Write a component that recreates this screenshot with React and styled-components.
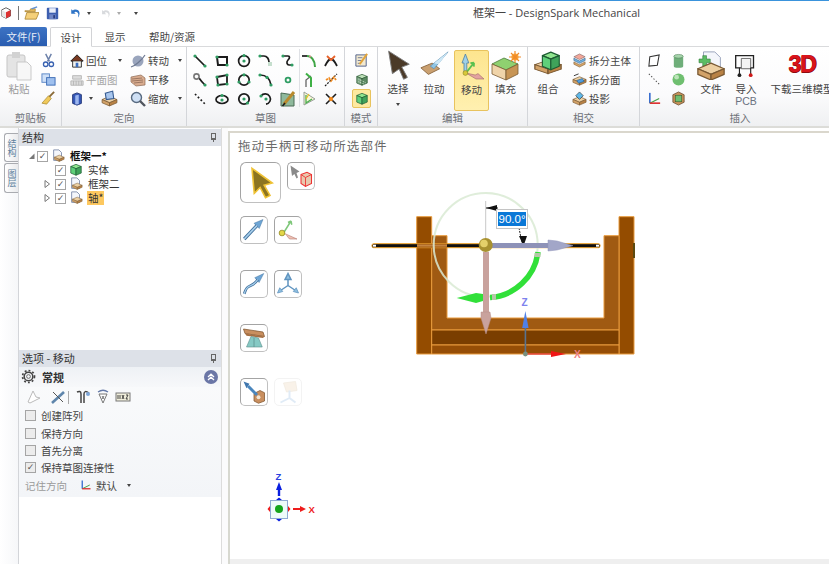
import React from 'react'
import styled, { createGlobalStyle } from 'styled-components'

const CJK = `"Noto Sans CJK SC", "Liberation Sans", sans-serif`

const GlobalStyle = createGlobalStyle`
  html, body { margin: 0; padding: 0; background: #fff; overflow: hidden; }
  body { font-family: ${CJK}; color: #444; }
`

const Window = styled.div`
  width: 829px;
  height: 564px;
  display: flex;
  flex-direction: column;
  overflow: hidden;
  border-top: 1px solid #3a93dc;
  box-sizing: border-box;
`

/* title bar */
const TitleBar = styled.div`
  height: 26px;
  flex: none;
  position: relative;
  display: flex;
  align-items: center;
  background: #fff;
  box-sizing: border-box;
  padding-bottom: 2px;
`
const Quick = styled.div`
  display: flex;
  align-items: center;
`
const QuickItem = styled.span`
  display: block;
  margin-left: ${(p) => p.$ml || 0}px;
`
const QuickSep = styled.span`
  width: 1px;
  height: 14px;
  background: #777;
  margin: 0 5px 0 6px;
`
const Title = styled.div`
  position: absolute;
  left: 473px;
  top: 4px;
  font: 11px/16px "Open Sans", ${CJK};
  color: #444;
  white-space: nowrap;
`
const Caret = styled.i`
  display: inline-block;
  width: 0;
  height: 0;
  border-left: 2.5px solid transparent;
  border-right: 2.5px solid transparent;
  border-top: 3px solid ${(p) => (p.$light ? '#aaa' : '#444')};
  margin: ${(p) => p.$m || '0'};
  flex: none;
`

/* tabs */
const TabBar = styled.div`
  height: 20px;
  flex: none;
  display: flex;
  align-items: flex-end;
  background: #fff;
  border-bottom: 1px solid #d9dadc;
  box-sizing: border-box;
`
const FileTab = styled.div`
  width: 47px;
  height: 19px;
  background: linear-gradient(#3d73c4, #2a5db0);
  border-radius: 2px 2px 0 0;
  color: #e6edf8;
  font-size: 10.5px;
  line-height: 19px;
  text-align: center;
`
const Tab = styled.div`
  font-size: 10.5px;
  line-height: 19px;
  height: 19px;
  color: #444;
  margin-left: ${(p) => p.$ml}px;
  width: ${(p) => p.$w}px;
  text-align: center;
  box-sizing: border-box;
  ${(p) =>
    p.$active &&
    `background:#fff;border:1px solid #d2d3d6;border-bottom:1px solid #fff;height:20px;margin-bottom:-1px;border-radius:2px 2px 0 0;`}
`

/* ribbon */
const Ribbon = styled.div`
  height: 79px;
  flex: none;
  display: flex;
  background: linear-gradient(#fff 0%, #fbfbfc 60%, #eff0f2 100%);
  border-bottom: 2px solid #dcdcd8;
`
const Group = styled.div`
  width: ${(p) => p.$w}px;
  flex: ${(p) => (p.$grow ? '1 1 auto' : 'none')};
  box-sizing: border-box;
  border-right: 1px solid #d4d6da;
  display: flex;
  flex-direction: column;
  overflow: hidden;
  ${(p) => p.$grow && 'border-right:none;'}
`
const GroupBody = styled.div`
  height: 63px;
  flex: none;
  display: flex;
  padding-left: ${(p) => p.$pl || 0}px;
  gap: ${(p) => p.$gap || 0}px;
`
const GroupLabel = styled.div`
  text-align: center;
  font-size: 10.5px;
  line-height: 16px;
  color: #6d7076;
  width: ${(p) => (p.$w ? `${p.$w}px` : 'auto')};
`
const Paste = styled.div`
  width: 38px;
  display: flex;
  flex-direction: column;
  align-items: center;
  font-size: 10.5px;
  color: #9a9a9a;
  line-height: 14px;
  padding-top: 3px;
`
const IconCol = styled.div`
  display: flex;
  flex-direction: column;
  align-items: ${(p) => p.$align || 'center'};
  width: ${(p) => p.$w || 'auto'};
  padding-top: 4px;
`
const SmallRow = styled.div`
  height: 19px;
  display: flex;
  align-items: center;
  font-size: 10.5px;
  color: ${(p) => (p.$off ? '#a6a6a6' : '#444')};
  white-space: nowrap;
  gap: 2px;
`
const SketchGrid = styled.div`
  display: grid;
  grid-template-columns: repeat(7, 21.9px);
  grid-auto-rows: 19px;
  justify-items: center;
  align-items: center;
  padding: 4px 0 0 2px;
  background: linear-gradient(#dfe1e5, #dfe1e5) 112px 2px / 1px 58px no-repeat;
`
const BigButton = styled.div`
  width: ${(p) => p.$w || 34}px;
  height: 61px;
  margin-top: ${(p) => (p.$active ? 3 : 1)}px;
  margin-left: ${(p) => p.$ml || 0}px;
  display: flex;
  flex-direction: column;
  align-items: center;
  box-sizing: border-box;
  padding-top: ${(p) => (p.$active ? 0 : 1)}px;
  font-size: 10.5px;
  line-height: 12px;
  color: #444;
  white-space: nowrap;
  border: 1px solid ${(p) => (p.$active ? '#e8c35e' : 'transparent')};
  border-radius: 2px;
  background: ${(p) => (p.$active ? 'linear-gradient(#fde58f, #fff0b0)' : 'none')};
  flex: none;
  em { font-style: normal; color: #6b7280; font-family: "Liberation Sans", sans-serif; }
`
const BigLabel = styled.span`
  display: block;
  text-align: center;
  margin-top: ${(p) => (p.$tight ? 1 : 3)}px;
`
const ModeCell = styled.div`
  width: 19px;
  height: 19px;
  display: flex;
  align-items: center;
  justify-content: center;
  box-sizing: border-box;
  border-radius: 2px;
  ${(p) => p.$active && 'background:#fde9a0;border:1px solid #e8c35e;'}
`

/* body */
const Body = styled.div`
  flex: 1;
  display: flex;
  min-height: 0;
  background: #fff;
`
const SideTabs = styled.div`
  width: 18px;
  flex: none;
  background: linear-gradient(90deg, #fff, #f6f7f9);
  padding-top: 5px;
  box-sizing: border-box;
  display: flex;
  flex-direction: column;
  align-items: flex-end;
  gap: 1px;
`
const SideTab = styled.div`
  width: 14px;
  height: ${(p) => p.$h}px;
  box-sizing: border-box;
  border: 1px solid #a9abb0;
  border-right: none;
  border-radius: 3px 0 0 3px;
  background: linear-gradient(90deg, #fff, #e9eaec);
  font-size: 9px;
  line-height: 12px;
  color: #5d7f9c;
  writing-mode: vertical-rl;
  display: flex;
  align-items: center;
  justify-content: center;
`
const LeftColumn = styled.div`
  width: 204px;
  flex: none;
  display: flex;
  flex-direction: column;
  background: #fff;
  padding-top: 1px;
  box-sizing: border-box;
  border-left: 1px solid #d3d5d9;
  border-right: 1px solid #dcdcdc;
`
const PanelHeader = styled.div`
  height: 17px;
  flex: none;
  display: flex;
  align-items: center;
  justify-content: space-between;
  box-sizing: border-box;
  padding: 0 5px 2px 3px;
  background: #dde1e8;
  font-size: 11px;
  color: #333;
`
const PinIcon = styled.span`
  width: 5px;
  height: 7px;
  border: 1px solid #666;
  border-bottom-width: 2px;
  box-sizing: border-box;
  position: relative;
  &::after {
    content: '';
    position: absolute;
    left: 1px;
    top: 5px;
    width: 1px;
    height: 3px;
    background: #666;
  }
`
const Tree = styled.div`
  height: 204px;
  flex: none;
  padding-top: 3px;
  box-sizing: border-box;
`
const TreeRow = styled.div`
  height: 14px;
  display: flex;
  align-items: center;
  padding-left: ${(p) => p.$indent}px;
  font-size: 10.5px;
  color: ${(p) => (p.$bold ? '#111' : '#333')};
  font-weight: ${(p) => (p.$bold ? 700 : 400)};
  white-space: nowrap;
`
const Expander = styled.svg`
  width: 7px;
  height: 8px;
  flex: none;
  margin-right: ${(p) => p.$mr}px;
`
const Check = styled.span`
  width: 11px;
  height: 11px;
  flex: none;
  box-sizing: border-box;
  border: 1px solid #a5a5a5;
  background: ${(p) => (p.$shade ? '#ececec' : '#fff')};
  display: flex;
  align-items: center;
  justify-content: center;
  font: 9px/9px "DejaVu Sans", sans-serif;
  color: #555;
  margin-right: ${(p) => p.$mr || 3}px;
`
const TreeLabel = styled.span`
  margin-left: 4px;
  padding: 0 1px;
  background: ${(p) => (p.$hl ? '#fdc85f' : 'none')};
  line-height: 14px;
`
const Options = styled.div`
  flex: 1;
  display: flex;
  flex-direction: column;
  background: #fff;
`
const OptionsInner = styled.div`
  height: 130px;
  background: linear-gradient(#fafbfc, #f3f5f8);
  display: flex;
  flex-direction: column;
`
const SectionHead = styled.div`
  height: 20px;
  box-sizing: border-box;
  display: flex;
  align-items: center;
  padding: 0 3px 1px 2px;
  gap: 6px;
  background: linear-gradient(#eef1f5, #f7f8fa);
  font-size: 11px;
  font-weight: 700;
  color: #333;
`
const Collapse = styled.svg`
  margin-left: auto;
  width: 14px;
  height: 14px;
  flex: none;
`
const IconStrip = styled.div`
  height: 20px;
  display: flex;
  align-items: center;
  padding-left: 7px;
  gap: 4px;
  > :first-child { margin-right: 4px; }
`
const StripSep = styled.span`
  width: 1px;
  height: 13px;
  background: #aaa;
  margin: 0 2px 0 -2px;
`
const OptionRow = styled.div`
  height: 17.4px;
  display: flex;
  align-items: center;
  padding-left: 6px;
  font-size: 10.5px;
  color: ${(p) => (p.$muted ? '#9a9a9a' : '#444')};
  white-space: nowrap;
`
const OptionValue = styled.span`
  display: flex;
  align-items: center;
  gap: 4px;
  margin-left: 13px;
  color: #444;
`

const Gutter = styled.div`
  width: 6px;
  flex: none;
  background: #fbfbfc;
`
const Canvas = styled.div`
  flex: 1;
  position: relative;
  background: #fff;
  margin-top: 3px;
  border-top: 2px solid #dad7cd;
  border-left: 2px solid #d7d8d0;
  display: flex;
  flex-direction: column;
  overflow: hidden;
`
const Hint = styled.div`
  font-size: 12.5px;
  line-height: 20px;
  height: 20px;
  padding: 3px 0 0 8px;
  letter-spacing: 1.1px;
  color: #6a6a6a;
`
const Palette = styled.div`
  display: flex;
  flex-direction: column;
  padding: 6px 0 0 10px;
`
const PaletteRow = styled.div`
  display: flex;
  align-items: flex-start;
  gap: 6px;
  margin-bottom: 26px;
  &:first-child { margin-bottom: 13px; }
`
const ToolButton = styled.div`
  width: ${(p) => (p.$big ? 41 : 28)}px;
  height: ${(p) => (p.$big ? 41 : 28)}px;
  box-sizing: border-box;
  border: 1px solid #a4a4a4;
  border-bottom-color: #c0c0c0;
  border-right-color: #c0c0c0;
  border-radius: ${(p) => (p.$big ? 6 : 5)}px;
  background: #fff;
  display: flex;
  align-items: center;
  justify-content: center;
  opacity: ${(p) => (p.$off ? 0.35 : 1)};
  ${(p) => p.$off && 'border-color:#ddd;'}
`
const ModelLayer = styled.svg`
  position: absolute;
  left: 135px;
  top: 52px;
`
const TriadLayer = styled.svg`
  position: absolute;
  left: 30px;
  top: 332px;
`
const AngleBox = styled.div`
  position: absolute;
  left: 266px;
  top: 76px;
  width: 32px;
  height: 20px;
  box-sizing: border-box;
  border: 1px solid #c4c4c4;
  background: #fff;
  padding: 2px 1px;
`
const AngleValue = styled.div`
  background: #0a78d7;
  color: #fff;
  font: 11.5px/14px "Liberation Sans", sans-serif;
  text-align: center;
  white-space: nowrap;
`
const Scrollbar = styled.div`
  position: absolute;
  left: 0;
  right: 0;
  bottom: 0;
  height: 5px;
  background: #efefef;
`
const ThreeD = styled.div`
  height: 30px;
  font: 900 23px/28px "Liberation Sans", sans-serif;
  letter-spacing: -1px;
  color: #d9141c;
  text-shadow: 0 1px 0 #8e0b10, 1px 0 0 #8e0b10;
`

/* icons */
const IconSvg = styled.svg`
  flex: none;
  display: block;
`
const Svg = ({ s = 16, children }) => (
  <IconSvg width={s} height={s} viewBox="0 0 16 16">
    {children}
  </IconSvg>
)
const G = '#2f9d63'
const K = '#1c1c1c'
const Pt = ({ x, y }) => <circle cx={x} cy={y} r="1.6" fill={G} />
const Ln = (p) => <path fill="none" stroke={K} strokeWidth="1.7" {...p} />

const Box3D = ({ top = '#8fe58f', side = '#3fa35a', front = '#5fd07a', stroke = '#1d5c33' }) => (
  <g stroke={stroke} strokeWidth=".8" strokeLinejoin="round">
    <path d="M8 1.5 14 4 8 6.5 2 4Z" fill={top} />
    <path d="M2 4 8 6.5V14L2 11.5Z" fill={front} />
    <path d="M14 4 8 6.5V14l6-2.5Z" fill={side} />
  </g>
)
const Brick = ({ y = 9 }) => (
  <g stroke="#7a5a34" strokeWidth=".7" strokeLinejoin="round">
    <path d={`M8 ${y - 3} 15 ${y} 8 ${y + 3} 1 ${y}Z`} fill="#eccfa2" />
    <path d={`M1 ${y} 8 ${y + 3}v3L1 ${y + 3}Z`} fill="#d2a268" />
    <path d={`M15 ${y} 8 ${y + 3}v3l7-3Z`} fill="#b98245" />
  </g>
)
const DocPart = () => (
  <>
    <path d="M3 1h6l3 3v9H3Z" fill="#f4f6fb" stroke="#6d7da0" strokeWidth=".9" />
    <g transform="translate(3 3) scale(.8)">
      <Brick y={8} />
    </g>
  </>
)
const Xmark = ({ hot }) => (
  <>
    <path d="M3 3 13 13" stroke={K} strokeWidth="1.6" />
    <path d="M13 3 3 13" stroke={K} strokeWidth="1.6" />
    <circle cx="8" cy="8" r={hot} fill="#f08a20" />
  </>
)

const sketch = [
  <><Ln d="M3 3 13 13" /><Pt x={3} y={3} /><Pt x={13} y={13} /></>,
  <><Ln d="M3 4H13V12H4Z" strokeWidth="2" /><Pt x={3} y={4} /><Pt x={13} y={12} /></>,
  <><circle cx="8" cy="8" r="5.4" fill="none" stroke={K} strokeWidth="1.7" /><Pt x={8} y={8} /><Pt x={8} y={2.6} /></>,
  <><Ln d="M2 3H6C9 3 11 6 11 9" /><path d="M11 9V13M13 9V13" stroke="#8dbf9d" strokeWidth="1" /><Pt x={2} y={3} /></>,
  <><Ln d="M3 3H8C10 3 10 5 8 7 6 9 7 12 9 12H12" /><Pt x={3} y={3} /><Pt x={12} y={12} /></>,
  <><Ln d="M1 3H6" /><path d="M6 3C10 3 14 7 14 14" fill="none" stroke="#3fa545" strokeWidth="2" /><circle cx="9" cy="3.5" r="1" fill="#d88" /></>,
  <><path d="M2 13C5 7 6 6 8 6S11 7 14 13" fill="none" stroke={K} strokeWidth="1.8" /><path d="M4 3 8 7 12 3" fill="none" stroke="#e8622a" strokeWidth="1.8" /></>,
  <><Ln d="M7 6C9 9 11 11 13 13" /><circle cx="4.5" cy="4.5" r="2.6" fill="none" stroke="#777" strokeWidth="1.6" /><Pt x={13} y={13} /></>,
  <><Ln d="M3 5 13 3V12L4 13Z" strokeWidth="1.8" /><Pt x={3} y={5} /><Pt x={13} y={3} /><Pt x={13} y={12} /><Pt x={4} y={13} /></>,
  <><circle cx="8" cy="8" r="5.2" fill="none" stroke={K} strokeWidth="1.7" /><Pt x={8} y={2.8} /><Pt x={3} y={10} /><Pt x={13} y={10} /></>,
  <><Ln d="M2 3C8 3 12 7 13 13" /><Pt x={2} y={3} /><Pt x={9} y={5.4} /><Pt x={13} y={13} /></>,
  <circle cx="8" cy="8" r="2.4" fill="none" stroke={G} strokeWidth="1.8" />,
  <><path d="M5 15V8L10 4" fill="none" stroke="#666" strokeWidth="1.3" /><path d="M10 15V6L5 1.5" fill="none" stroke="#3fb045" strokeWidth="2" /></>,
  <><path d="M2 14 14 2" stroke={K} strokeWidth="1.2" strokeDasharray="2 1.2" /><path d="M3 8 6 6 8 9 11 5 13 8" fill="none" stroke="#f08a20" strokeWidth="1.8" strokeDasharray="2.4 1" /></>,
  <path d="M3 3 13 13" stroke={K} strokeWidth="1.7" strokeDasharray="1.8 2.2" />,
  <><ellipse cx="8" cy="8.5" rx="6" ry="4" fill="none" stroke={K} strokeWidth="1.7" /><Pt x={8} y={4.5} /><Pt x={8} y={9} /></>,
  <><circle cx="8" cy="8" r="5.2" fill="none" stroke={K} strokeWidth="1.8" /><Pt x={8} y={8} /><Pt x={11.5} y={12} /></>,
  <><path d="M3 5A5.2 5.2 0 1 1 8 13.2" fill="none" stroke={K} strokeWidth="1.7" /><Pt x={3} y={5} /><Pt x={8} y={8} /></>,
  <><path d="M1 2 14 4V15L1 15Z" fill="#8fb99c" stroke="#4b6b55" /><path d="M14 1 4 13" stroke="#b98a2e" strokeWidth="3" /><path d="M5 12 2.5 15" stroke={K} strokeWidth="1.6" /></>,
  <><path d="M3 1 14 8 3 14Z" fill="#faf7d8" stroke="#98a098" /><path d="M5 4V12L11 8" fill="none" stroke="#4caf50" strokeWidth="1.3" /><path d="M5 8 8 3" stroke="#e8c020" strokeWidth="1.2" /></>,
  <Xmark hot={2.2} />,
]

const Cube = () => (
  <Svg s={12}>
    <path d="M8 1 14 4V12L8 15 2 12V4Z" fill="#fff" stroke="#333" />
    <path d="M8 7 14 4V12L8 15Z" fill="#d33" />
    <path d="M2 4 8 7V15L2 12Z" fill="#e8e8e8" />
  </Svg>
)
const Folder = () => (
  <Svg s={15}>
    <path d="M1 5h5l1-2h5v3H1Z" fill="#e2b658" stroke="#a67f2a" strokeWidth=".7" />
    <path d="M1 14 3 7h13l-3 7Z" fill="#f5d07a" stroke="#a67f2a" strokeWidth=".8" />
    <path d="M8 3 14 1" stroke="#5f90d4" strokeWidth="1.4" />
  </Svg>
)
const Save = () => (
  <Svg s={13}>
    <rect x="1" y="1" width="14" height="14" rx="1" fill="#3d5fb0" />
    <rect x="4" y="1.5" width="8" height="5.5" fill="#e8eefa" />
    <rect x="4" y="9" width="8" height="6" fill="#6f86c6" />
    <rect x="9" y="10" width="2" height="4" fill="#26397a" />
  </Svg>
)
const Undo = ({ off }) => (
  <Svg s={off ? 11 : 12}>
    <path
      d="M3 3V9H9L7 7C9 5.5 12 6.5 12.5 10L12 14C15.5 10 15 3 8 3.2 7 3.3 6 3.8 5.2 4.6Z"
      fill={off ? '#d8dadd' : '#2f74c6'}
    />
  </Svg>
)
const PasteIcon = () => (
  <Svg s={32}>
    <rect x="2" y="2.5" width="9" height="11" rx="1" fill="#e4e4e4" stroke="#c5c5c5" strokeWidth=".5" />
    <rect x="4.5" y="1" width="4" height="3" fill="#d2d2d2" />
    <path d="M7 6h5l2 2v7H7Z" fill="#f7f7f7" stroke="#c9c9c9" strokeWidth=".5" />
  </Svg>
)
const Scissors = () => (
  <Svg s={15}>
    <path d="M5 1 9 9M11 1 7 9" stroke="#6a7fa8" strokeWidth="1.5" />
    <circle cx="5" cy="12" r="2.4" fill="none" stroke="#3760b0" strokeWidth="1.4" />
    <circle cx="11" cy="12" r="2.4" fill="none" stroke="#3760b0" strokeWidth="1.4" />
  </Svg>
)
const Copy = () => (
  <Svg s={15}>
    <rect x="1" y="2" width="8" height="9" fill="#cfe0f7" stroke="#5b86c6" />
    <rect x="6" y="6" width="9" height="8" fill="#9fc0ee" stroke="#3d6cb5" />
  </Svg>
)
const Brush = () => (
  <Svg s={15}>
    <path d="M14 1 8 7" stroke="#8a6a36" strokeWidth="2" />
    <path d="M8 5 11 8 6 14 1 13Z" fill="#f0c95a" stroke="#a08028" strokeWidth=".7" />
  </Svg>
)
const Home = () => (
  <Svg s={14}>
    <path d="M8 1 1 8h2v7h10V8h2Z" fill="#f2f2ee" stroke="#222" />
    <path d="M8 1 1 8h14Z" fill="#7a3a22" stroke="#222" strokeWidth=".8" />
    <rect x="6.5" y="10" width="3" height="5" fill="#3b6ec0" />
  </Svg>
)
const Planet = () => (
  <Svg s={16}>
    <circle cx="8" cy="8" r="5.5" fill="#9aa5bd" />
    <path d="M1 14C5 13 12 7 15 2" stroke="#6f7a92" strokeWidth="1.2" fill="none" />
  </Svg>
)
const Grid = () => (
  <Svg s={14}>
    <path d="M3 3H13V7H3ZM1 9H15V14H1Z" fill="#dcdcdc" stroke="#b5b5b5" />
    <path d="M4 9v5M7 9v5M10 9v5M13 9v5" stroke="#b5b5b5" />
  </Svg>
)
const Hand = () => (
  <Svg s={16}>
    <path d="M1 5 11 3 15 6V13L6 14 1 10Z" fill="#d9ac8f" stroke="#8d6a55" strokeWidth=".7" />
    <path d="M2 7 12 6M2 9 13 8M4 11 13 10" stroke="#8d6a55" strokeWidth=".8" />
  </Svg>
)
const BlueBox = () => (
  <Svg s={14}>
    <path d="M3 3 8 1 13 3V13L8 15 3 13Z" fill="#3558b8" stroke="#1d2f70" />
    <path d="M6 4 10 3V14L6 14.4Z" fill="#9db7ef" />
  </Svg>
)
const ViewBox = () => (
  <Svg s={17}>
    <Brick y={9} />
    <path d="M4 3 11 1 12 8 5 9Z" fill="#a8c6ee" stroke="#33588f" />
  </Svg>
)
const Glass = () => (
  <Svg s={16}>
    <circle cx="6.5" cy="6.5" r="5" fill="#cfe0f5" stroke="#586a80" strokeWidth="1.4" />
    <path d="M10 10 15 15" stroke="#50555e" strokeWidth="2.4" />
  </Svg>
)
const ModeOne = () => (
  <Svg s={15}>
    <path d="M2 2H13V14H2Z" fill="#f2e9d0" stroke="#50608a" />
    <path d="M4 5H9M4 8H8M4 11H7" stroke="#50608a" strokeWidth=".8" />
    <path d="M14 1 6 12" stroke="#e1a43c" strokeWidth="2.2" />
  </Svg>
)
const ModeTwo = () => (
  <Svg s={14}>
    <Box3D top="#bde0b8" front="#7ea685" side="#5b8a63" stroke="#2d5a35" />
    <path d="M4 7 12 11M4 10 11 13" stroke="#e5f1e2" strokeDasharray="1 1" />
  </Svg>
)
const SelectArrow = () => (
  <Svg s={30}>
    <path d="M3 1 14 8 10 9.5 13 15 11 16 8.6 10.5 5 13Z" fill="#4b3a28" stroke="#7a7a7a" strokeWidth=".5" transform="translate(0 -.4)" />
  </Svg>
)
const Pull = () => (
  <Svg s={30}>
    <path d="M1 9.5 7 7 11 10 5 13Z" fill="#caa070" stroke="#8e6b44" strokeWidth=".5" />
    <path d="M15.5 1 6 8.6 8 10Z" fill="#8fc6e6" stroke="#5f8fb0" strokeWidth=".4" />
    <path d="M15.5 1 8 7 10.4 7.6Z" fill="#cfe8f6" />
  </Svg>
)
const Move = () => (
  <Svg s={32}>
    <path d="M4.7 1.5 3 6H4V11H5.4V6H6.4Z" fill="#9fd0ea" stroke="#4f7fa0" strokeWidth=".4" />
    <path d="M5 11 10 14H14L11 11.3 9.6 12Z" fill="#e3a3a0" stroke="#a06a68" strokeWidth=".3" />
    <path d="M5 11 9 5.8M9 5.8 7.2 6.1M9 5.8 8.9 7.8" stroke="#5ac04f" strokeWidth=".9" fill="none" />
    <circle cx="4.7" cy="11" r="1.2" fill="#d8c83a" stroke="#8f8420" strokeWidth=".3" />
  </Svg>
)
const Fill = () => (
  <Svg s={32}>
    <path d="M1 7 7 4 14 7 8 10Z" fill="#8fd070" stroke="#4a7a3a" strokeWidth=".4" />
    <path d="M1 7 8 10V15L1 12Z" fill="#f0d4aa" stroke="#7a5a34" strokeWidth=".4" />
    <path d="M14 7 8 10V15L14 12Z" fill="#c79455" stroke="#7a5a34" strokeWidth=".4" />
    <circle cx="12.5" cy="3.5" r="1.8" fill="#ffb23a" />
    <path d="M12.5 .5V6.5M9.5 3.5H15.5M10.5 1.5 14.5 5.5M14.5 1.5 10.5 5.5" stroke="#f08a2a" strokeWidth=".6" />
  </Svg>
)
const Combine = () => (
  <Svg s={30}>
    <g transform="translate(0 3) scale(1 .8)">
      <Brick y={6} />
    </g>
    <g transform="translate(3.5 0) scale(.75)">
      <Box3D />
    </g>
  </Svg>
)
const SplitBody = ({ kind }) => (
  <Svg s={15}>
    {kind === 0 && (
      <>
        <path d="M8 1 14 4 8 7 2 4Z" fill="#f2a79a" stroke="#7a5a5a" strokeWidth=".6" />
        <path d="M2 5.5 8 8.5 14 5.5V8L8 11 2 8Z" fill="#6fb1e0" stroke="#335f85" strokeWidth=".6" />
        <path d="M2 9.5 8 12.5 14 9.5V12L8 15 2 12Z" fill="#d9a768" stroke="#7a5a34" strokeWidth=".6" />
      </>
    )}
    {kind === 1 && (
      <>
        <Brick y={8} />
        <path d="M5 9 11 7 13 10 7 12Z" fill="#4f9de0" stroke="#28577f" strokeWidth=".6" />
        <path d="M2 4 7 2" stroke="#333" />
      </>
    )}
    {kind === 2 && (
      <>
        <Brick y={9} />
        <path d="M8 1 12 5 8 9 4 5Z" fill="#5fb8e8" stroke="#333" strokeWidth=".7" />
      </>
    )}
  </Svg>
)
const Sketch = ({ id }) => <Svg s={16}>{sketch[id]}</Svg>

const InsertIcon = ({ kind, s = 15 }) => (
  <Svg s={s}>
    {kind === 0 && <path d="M3 4 13 2 11 13 2 14Z" fill="#fff" stroke="#333" strokeWidth="1.1" />}
    {kind === 1 && (
      <>
        <rect x="3" y="3" width="10" height="11" fill="#6fae7a" />
        <ellipse cx="8" cy="3.5" rx="5" ry="2" fill="#a7d5ac" stroke="#4d7f55" strokeWidth=".6" />
        <ellipse cx="8" cy="14" rx="5" ry="1.6" fill="#6fae7a" />
      </>
    )}
    {kind === 2 && <path d="M2 2 14 14" stroke="#555" strokeDasharray="1.5 2" strokeWidth="1.1" />}
    {kind === 3 && (
      <>
        <circle cx="8" cy="8" r="6.4" fill="#6fbf70" />
        <circle cx="6" cy="5.5" r="2.5" fill="#bce4b9" />
      </>
    )}
    {kind === 4 && (
      <>
        <path d="M3 2V13" fill="none" stroke="#3a6fd0" strokeWidth="1.8" />
        <path d="M3 13 13 8" stroke="#46a04a" strokeWidth="1.3" />
        <path d="M3 13H14" stroke="#d33" strokeWidth="1.8" />
      </>
    )}
    {kind === 5 && (
      <>
        <path d="M8 1 14 4V12L8 15 2 12V4Z" fill="#c7935a" stroke="#66472a" strokeWidth=".8" />
        <rect x="4.5" y="4.5" width="7" height="7" fill="#6fbf70" stroke="#33552a" strokeWidth=".6" />
      </>
    )}
  </Svg>
)
const FileInsert = () => (
  <Svg s={30}>
    <path d="M4 1h6l3 3v7H4Z" fill="#f4f6fb" stroke="#7d8aa8" strokeWidth=".4" />
    <path d="M1.6 4.8H3.6V3H5.6V4.8H7.6V6.8H5.6V8.6H3.6V6.8H1.6Z" fill="#5abd63" stroke="#2f7a38" strokeWidth=".3" />
    <Brick y={10} />
  </Svg>
)
const PcbInsert = () => (
  <Svg s={30}>
    <path d="M2.5 3H12V9.5H2.5Z" fill="none" stroke="#222" strokeWidth=".7" />
    <path d="M5.5 4.5H10.5V10H5.5Z" fill="#f3f3f3" stroke="#666" strokeWidth=".5" />
    <path d="M4.5 9.5V13M10.5 9.5V13" stroke="#222" strokeWidth=".6" />
    <circle cx="4.5" cy="13.4" r="1" fill="#222" />
    <circle cx="10.5" cy="13.4" r="1" fill="#d01818" />
  </Svg>
)

const GearIcon = () => (
  <Svg s={15}>
    <circle cx="8" cy="8" r="4.6" fill="none" stroke="#444" strokeWidth="1.6" />
    <circle cx="8" cy="8" r="6.4" fill="none" stroke="#444" strokeWidth="1.8" strokeDasharray="2 2.2" />
    <circle cx="8" cy="8" r="2" fill="none" stroke="#666" />
  </Svg>
)
const Strip = ({ id }) => (
  <Svg s={16}>
    {id === 0 && <path d="M2 13 7 2 10 8 14 9 4 14Z" fill="#fff" stroke="#bbb" />}
    {id === 1 && (
      <>
        <path d="M2 14 14 3" stroke="#5f86ac" strokeWidth="2.6" />
        <path d="M3 3 13 13" stroke="#555" />
      </>
    )}
    {id === 2 && (
      <>
        <path d="M2 3C4 2 6 2 6 5V14M9 14V5C9 2 11 2 14 4" fill="none" stroke="#444" strokeWidth="1.5" />
        <circle cx="13" cy="5" r="2" fill="#7ea6d8" />
      </>
    )}
    {id === 3 && (
      <>
        <path d="M3 3C6 1 10 1 13 3" fill="none" stroke="#667aa8" strokeWidth="1.4" />
        <path d="M4 5H12L8 14Z" fill="#fff" stroke="#777" />
        <path d="M7 7 9 10M9 7 7 10" stroke="#444" strokeWidth=".7" />
      </>
    )}
    {id === 4 && (
      <>
        <rect x="1" y="4" width="14" height="8" fill="#f1efdc" stroke="#777" />
        <path d="M3 6V10M5 6V10M7 6 9 10M9 6 7 10M11 6H13L11 10H13" stroke="#333" strokeWidth=".9" fill="none" />
      </>
    )}
  </Svg>
)

const Tool = ({ id }) => (
  <Svg s={id === 0 ? 36 : 24}>
    {id === 0 && (
      <path d="M4 1.5 13 8 9.4 9 12 13.5 10 14.5 7.6 10 5 12.6Z" fill="#8c7420" stroke="#efc234" strokeWidth=".7" />
    )}
    {id === 1 && (
      <>
        <path d="M1 1 7 5 5 6 6 9 5 9.6 3.6 6.6 2 8Z" fill="#8a8a8a" />
        <path d="M8 7 12 5.5 15 7V13L11 15 8 13Z" fill="#e8c9ae" stroke="#ee3333" strokeWidth=".7" />
        <path d="M8 7 11 9 15 7M11 9V15" stroke="#ee3333" strokeWidth=".6" fill="none" />
      </>
    )}
    {id === 2 && (
      <>
        <path d="M14 1 8 3.5 11.5 7Z" fill="#6da5d5" stroke="#3f6f9c" strokeWidth=".3" />
        <path d="M10 5 1.5 14" stroke="#3f6f9c" strokeWidth="2.2" />
        <path d="M10 5 1.5 14" stroke="#a9d0ec" strokeWidth="1.1" />
      </>
    )}
    {id === 3 && (
      <>
        <path d="M5 10 10 2M10 2 8 3M10 2 10.5 4.5" stroke="#7fc77a" strokeWidth="1" fill="none" />
        <path d="M5 10 14 14H9L7 11.6" fill="#efc2b5" stroke="#b57a70" strokeWidth=".4" />
        <circle cx="4" cy="10" r="1.9" fill="#e3d648" stroke="#8f8620" strokeWidth=".5" />
      </>
    )}
    {id === 4 && (
      <>
        <path d="M14.5 1 8.5 3.8 11.4 7Z" fill="#6da5d5" stroke="#3f6f9c" strokeWidth=".3" />
        <path d="M10.5 5C8 9 6 8.5 4 10 2.5 11 2 13 1.5 14.5" fill="none" stroke="#3f6f9c" strokeWidth="1.8" />
        <path d="M10.5 5C8 9 6 8.5 4 10 2.5 11 2 13 1.5 14.5" fill="none" stroke="#a9d0ec" strokeWidth=".8" />
      </>
    )}
    {id === 5 && (
      <>
        <path d="M8 1 6 5H10ZM8 5V9M8 9 2 13M8 9 14 13" stroke="#5f93bf" strokeWidth="1" fill="#8fbfdf" />
        <path d="M1 14 2.5 10.5 4.5 13ZM15 14 13.5 10.5 11.5 13Z" fill="#8fbfdf" stroke="#5f93bf" strokeWidth=".5" />
      </>
    )}
    {id === 6 && (
      <>
        <path d="M1 2 14 4 15 7 2 5Z" fill="#c98f5f" stroke="#80562f" strokeWidth=".5" />
        <path d="M2 5 15 7 14 8 3 6.5Z" fill="#a66f42" />
        <path d="M6 7 11 8 13.5 14 3 14Z" fill="#86c9c4" stroke="#5c8f8b" strokeWidth=".4" />
        <path d="M8 8V14" stroke="#5c8f8b" strokeWidth=".5" />
      </>
    )}
    {id === 7 && (
      <>
        <path d="M8 9 12 7 15 8.5V14L11 15.5 8 14Z" fill="#c98f5f" stroke="#80562f" strokeWidth=".5" />
        <circle cx="11" cy="11.5" r="1.3" fill="#f1e5d4" />
        <path d="M1 1 5 2.5 3 5.5Z" fill="#3f76ad" />
        <path d="M4 4 10 10" stroke="#4a86bd" strokeWidth="2" />
      </>
    )}
    {id === 8 && (
      <>
        <path d="M5 2 13 1 14 7 7 8Z" fill="#efdcc2" stroke="#d8c6a8" strokeWidth=".5" />
        <path d="M9 7V12M9 12 3 15M9 12 13 15" stroke="#a8c8e8" strokeWidth="1.3" />
      </>
    )}
  </Svg>
)

const Model = () => (
  <ModelLayer width="280" height="185" viewBox="365 185 280 185">
    <path d="M416.7 216.7H431.7V354H416.7ZM619 216.7H634V354H619Z" fill="#944c00" stroke="#e89a3c" />
    <path d="M431.7 235.7H447V318H604V235.7H619V330H431.7Z" fill="#a05a12" stroke="#e89a3c" />
    <path d="M431.7 330H619V345H431.7Z" fill="#7a3e00" stroke="#e89a3c" />
    <path d="M431.7 345H619V354H431.7Z" fill="#964e06" stroke="#e89a3c" />
    <path d="M634 243V258" stroke="#5c4a10" strokeWidth="2" />
    <rect x="372" y="243.7" width="228" height="4" rx="1.5" fill="#111" stroke="#f3a52b" />
    <rect x="373" y="244.7" width="3" height="2" fill="#fff" />
    <rect x="596" y="244.7" width="3" height="2" fill="#fff" />
    <path d="M417 245.7H447" stroke="#b06a22" strokeWidth="4" />
    <path d="M417 245.7H447" stroke="#c98a4a" strokeWidth="1" />
    <circle cx="485.7" cy="245" r="52" fill="none" stroke="#d9ead3" strokeWidth="2" opacity=".85" />
    <path d="M485.7 201V240" stroke="#c8c8c8" />
    <path d="M486 208H498" stroke="#222" />
    <path d="M486 208 497 205V211Z" fill="#111" />
    <path d="M519 228 522 243" stroke="#222" strokeDasharray="2 1" />
    <path d="M519 236H527L523.5 246Z" fill="#111" />
    <rect x="490" y="243" width="60" height="5" fill="#8e92b8" />
    <path d="M548 240 557 241 573 245.7 557 250 548 251Z" fill="#a2a6c8" stroke="#8e92b8" strokeWidth=".5" />
    <path d="M538 252A52 52 0 0 1 490 297.5" fill="none" stroke="#31e039" strokeWidth="5.5" />
    <rect x="534.5" y="253" width="6" height="4" fill="#b5c7a8" />
    <rect x="492" y="294" width="4" height="6" fill="#b5c7a8" />
    <path d="M456.7 298 476 293 483 294V301L476 303Z" fill="#31e039" />
    <rect x="483" y="252" width="6" height="60" fill="#c9a29d" />
    <path d="M481 312 490 312 491 318 486 334 481 318Z" fill="#c9a29d" stroke="#b48f8a" strokeWidth=".5" />
    <circle cx="485.7" cy="245" r="7" fill="#a8912f" />
    <circle cx="484" cy="243.5" r="3.8" fill="#e4d06a" />
    <path d="M525.4 354V325" stroke="#59738f" strokeWidth="1.6" />
    <path d="M525.4 311 528.6 328H522.2Z" fill="#4f80e6" />
    <path d="M526 354H552" stroke="#e83a3a" strokeWidth="1.3" />
    <path d="M551 351 566 354 551 357Z" fill="#f01616" />
    <circle cx="525.4" cy="354" r="2.4" fill="#79907e" />
    <text x="521.5" y="306" fontFamily="Liberation Sans" fontWeight="700" fontSize="10" fill="#7d82ee">Z</text>
    <text x="574" y="358" fontFamily="Liberation Sans" fontWeight="700" fontSize="10" fill="#ee8080">X</text>
  </ModelLayer>
)

const Triad = () => (
  <TriadLayer width="70" height="60" viewBox="260 465 70 60">
    <rect x="270.5" y="500.5" width="17" height="18" fill="#eefbf9" stroke="#8fa9d3" />
    <circle cx="279" cy="509" r="4" fill="#15a51c" />
    <path d="M279 482 282 490H280.2V496H277.8V490H276Z" fill="#0a1fe0" />
    <path d="M276 500 279 497.6 282 500ZM276 519 279 521.4 282 519Z" fill="#0a1fe0" />
    <path d="M270 506 267.5 509 270 512ZM288 506 290.5 509 288 512Z" fill="#ee1c1c" />
    <path d="M293 508H300V506L306 509 300 512V510H293Z" fill="#ee1c1c" />
    <text x="275.5" y="480" fontFamily="Liberation Sans" fontWeight="700" fontSize="9.5" fill="#2a3fe0">Z</text>
    <text x="308.5" y="512.5" fontFamily="Liberation Sans" fontWeight="700" fontSize="9.5" fill="#ee2222">X</text>
  </TriadLayer>
)

const ExpandOpen = () => (
  <Expander $mr={2} viewBox="0 0 7 8">
    <path d="M6.5 1.5V7H1Z" fill="#777" />
  </Expander>
)
const ExpandClosed = () => (
  <Expander $mr={4} viewBox="0 0 7 8">
    <path d="M1 .5 5.5 4 1 7.5Z" fill="#fff" stroke="#777" />
  </Expander>
)

const App = () => (
  <Window>
    <GlobalStyle />
    <TitleBar>
      <Quick>
        <QuickItem><Cube /></QuickItem>
        <QuickSep />
        <Folder />
        <QuickItem $ml={7}><Save /></QuickItem>
        <QuickItem $ml={10}><Undo /></QuickItem>
        <Caret $m="0 9px 0 6px" />
        <Undo off />
        <Caret $light $m="0 13px 0 6px" />
        <Caret />
      </Quick>
      <Title>框架一 - DesignSpark Mechanical</Title>
    </TitleBar>
    <TabBar>
      <FileTab>文件(F)</FileTab>
      <Tab $active $ml={3} $w={42}>设计</Tab>
      <Tab $ml={0} $w={46}>显示</Tab>
      <Tab $ml={9} $w={50}>帮助/资源</Tab>
    </TabBar>
    <Ribbon>
      <Group $w={62}>
        <GroupBody>
          <Paste>
            <PasteIcon />
            粘贴
          </Paste>
          <IconCol $w="20px">
            <SmallRow><Scissors /></SmallRow>
            <SmallRow><Copy /></SmallRow>
            <SmallRow><Brush /></SmallRow>
          </IconCol>
        </GroupBody>
        <GroupLabel>剪贴板</GroupLabel>
      </Group>
      <Group $w={125}>
        <GroupBody $pl={8}>
          <IconCol $align="flex-start" $w="60px">
            <SmallRow><Home /><span>回位</span><Caret $m="0 0 0 9px" /></SmallRow>
            <SmallRow $off><Grid /><span>平面图</span></SmallRow>
            <SmallRow><BlueBox /><Caret $m="0 6px 0 3px" /><ViewBox /></SmallRow>
          </IconCol>
          <IconCol $align="flex-start">
            <SmallRow><Planet /><span>转动</span><Caret $m="0 0 0 7px" /></SmallRow>
            <SmallRow><Hand /><span>平移</span></SmallRow>
            <SmallRow><Glass /><span>缩放</span><Caret $m="0 0 0 7px" /></SmallRow>
          </IconCol>
        </GroupBody>
        <GroupLabel>定向</GroupLabel>
      </Group>
      <Group $w={158}>
        <GroupBody>
          <SketchGrid>
            {sketch.map((_, i) => (
              <Sketch key={i} id={i} />
            ))}
          </SketchGrid>
        </GroupBody>
        <GroupLabel>草图</GroupLabel>
      </Group>
      <Group $w={33}>
        <GroupBody $pl={7}>
          <IconCol>
            <ModeCell><ModeOne /></ModeCell>
            <ModeCell><ModeTwo /></ModeCell>
            <ModeCell $active><Svg s={14}><Box3D /></Svg></ModeCell>
          </IconCol>
        </GroupBody>
        <GroupLabel>模式</GroupLabel>
      </Group>
      <Group $w={150}>
        <GroupBody $pl={3}>
          <BigButton $w={34}>
            <SelectArrow />
            <BigLabel>选择</BigLabel>
            <Caret $m="8px 0 0" />
          </BigButton>
          <BigButton $w={38}><Pull /><BigLabel>拉动</BigLabel></BigButton>
          <BigButton $w={35} $ml={1} $active><Move /><BigLabel $tight>移动</BigLabel></BigButton>
          <BigButton $w={33}><Fill /><BigLabel $tight>填充</BigLabel></BigButton>
        </GroupBody>
        <GroupLabel>编辑</GroupLabel>
      </Group>
      <Group $w={112}>
        <GroupBody $pl={3} $gap={7}>
          <BigButton $w={34}><Combine /><BigLabel>组合</BigLabel></BigButton>
          <IconCol $align="flex-start">
            <SmallRow><SplitBody kind={0} />拆分主体</SmallRow>
            <SmallRow><SplitBody kind={1} />拆分面</SmallRow>
            <SmallRow><SplitBody kind={2} />投影</SmallRow>
          </IconCol>
        </GroupBody>
        <GroupLabel>相交</GroupLabel>
      </Group>
      <Group $w={189} $grow>
        <GroupBody $pl={7} $gap={9}>
          <IconCol>
            <SmallRow><InsertIcon kind={0} /></SmallRow>
            <SmallRow><InsertIcon kind={2} /></SmallRow>
            <SmallRow><InsertIcon kind={4} /></SmallRow>
          </IconCol>
          <IconCol>
            <SmallRow><InsertIcon kind={1} /></SmallRow>
            <SmallRow><InsertIcon kind={3} /></SmallRow>
            <SmallRow><InsertIcon kind={5} /></SmallRow>
          </IconCol>
          <BigButton $w={32}><FileInsert /><BigLabel>文件</BigLabel></BigButton>
          <BigButton $w={32} $ml={-6}><PcbInsert /><BigLabel>导入<br /><em>PCB</em></BigLabel></BigButton>
          <BigButton $w={62}><ThreeD>3D</ThreeD><BigLabel>下载三维模型</BigLabel></BigButton>
        </GroupBody>
        <GroupLabel $w={200}>插入</GroupLabel>
      </Group>
    </Ribbon>
    <Body>
      <SideTabs>
        <SideTab $h={29}>结构</SideTab>
        <SideTab $h={30}>图层</SideTab>
      </SideTabs>
      <LeftColumn>
        <PanelHeader>结构<PinIcon /></PanelHeader>
        <Tree>
          <TreeRow $indent={9} $bold>
            <ExpandOpen />
            <Check><span>✓</span></Check>
            <Svg s={14}><DocPart /></Svg>
            <TreeLabel>框架一*</TreeLabel>
          </TreeRow>
          <TreeRow $indent={36}>
            <Check><span>✓</span></Check>
            <Svg s={14}><Box3D /></Svg>
            <TreeLabel>实体</TreeLabel>
          </TreeRow>
          <TreeRow $indent={25}>
            <ExpandClosed />
            <Check><span>✓</span></Check>
            <Svg s={14}><DocPart /></Svg>
            <TreeLabel>框架二</TreeLabel>
          </TreeRow>
          <TreeRow $indent={25}>
            <ExpandClosed />
            <Check><span>✓</span></Check>
            <Svg s={14}><DocPart /></Svg>
            <TreeLabel $hl>轴*</TreeLabel>
          </TreeRow>
        </Tree>
        <Options>
          <PanelHeader>选项 - 移动<PinIcon /></PanelHeader>
          <OptionsInner>
            <SectionHead>
              <GearIcon />常规
              <Collapse viewBox="0 0 14 14">
                <circle cx="7" cy="7" r="7" fill="#6a76a6" />
                <path d="M4 7 7 4.2 10 7M4 10 7 7.2 10 10" fill="none" stroke="#fff" strokeWidth="1.3" />
              </Collapse>
            </SectionHead>
            <IconStrip>
              <Strip id={0} />
              <Strip id={1} />
              <StripSep />
              <Strip id={2} />
              <Strip id={3} />
              <Strip id={4} />
            </IconStrip>
            <OptionRow><Check $shade $mr={5} />创建阵列</OptionRow>
            <OptionRow><Check $shade $mr={5} />保持方向</OptionRow>
            <OptionRow><Check $shade $mr={5} />首先分离</OptionRow>
            <OptionRow><Check $shade $mr={5}>✓</Check>保持草图连接性</OptionRow>
            <OptionRow $muted>
              记住方向
              <OptionValue><InsertIcon kind={4} s={12} />默认<Caret $m="0 0 0 6px" /></OptionValue>
            </OptionRow>
          </OptionsInner>
        </Options>
      </LeftColumn>
      <Gutter />
      <Canvas>
        <Hint>拖动手柄可移动所选部件</Hint>
        <Palette>
          <PaletteRow>
            <ToolButton $big><Tool id={0} /></ToolButton>
            <ToolButton><Tool id={1} /></ToolButton>
          </PaletteRow>
          <PaletteRow>
            <ToolButton><Tool id={2} /></ToolButton>
            <ToolButton><Tool id={3} /></ToolButton>
          </PaletteRow>
          <PaletteRow>
            <ToolButton><Tool id={4} /></ToolButton>
            <ToolButton><Tool id={5} /></ToolButton>
          </PaletteRow>
          <PaletteRow>
            <ToolButton><Tool id={6} /></ToolButton>
          </PaletteRow>
          <PaletteRow>
            <ToolButton><Tool id={7} /></ToolButton>
            <ToolButton $off><Tool id={8} /></ToolButton>
          </PaletteRow>
        </Palette>
        <Model />
        <AngleBox><AngleValue>90.0°</AngleValue></AngleBox>
        <Triad />
        <Scrollbar />
      </Canvas>
    </Body>
  </Window>
)

export default App
